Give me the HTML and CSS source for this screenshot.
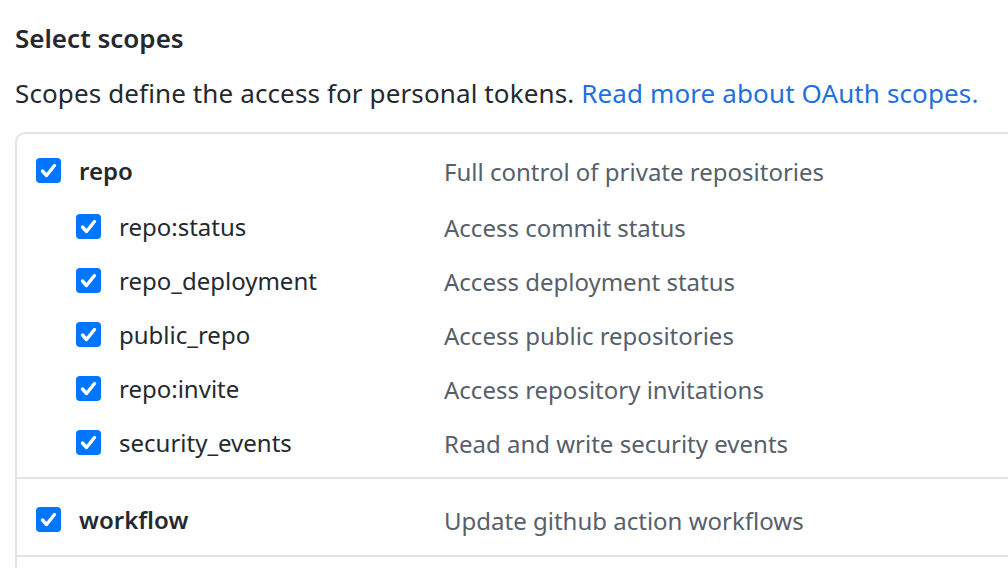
FILE: index.html
```html
<!DOCTYPE html>
<html>
<head>
<meta charset="utf-8">
<link rel="stylesheet" href="styles.css">
</head>
<body>
<div class="page">
  <h3 class="title">Select scopes</h3>
  <p class="lead">Scopes define the access for personal tokens. <a href="#" class="link">Read more about OAuth scopes.</a></p>
  <div class="box">
    <div class="group first">
      <div class="row main">
        <span class="name"><span class="cb"><svg viewBox="0 0 25 25" width="25" height="25"><path d="M6.5 13 L10.5 17.5 L18.5 7.5" fill="none" stroke="#fff" stroke-width="3.4" stroke-linecap="round" stroke-linejoin="round"/></svg></span><b>repo</b></span>
        <span class="desc">Full control of private repositories</span>
      </div>
      <div class="sub">
        <div class="row">
          <span class="name"><span class="cb"><svg viewBox="0 0 25 25" width="25" height="25"><path d="M6.5 13 L10.5 17.5 L18.5 7.5" fill="none" stroke="#fff" stroke-width="3.4" stroke-linecap="round" stroke-linejoin="round"/></svg></span>repo:status</span>
          <span class="desc">Access commit status</span>
        </div>
        <div class="row">
          <span class="name"><span class="cb"><svg viewBox="0 0 25 25" width="25" height="25"><path d="M6.5 13 L10.5 17.5 L18.5 7.5" fill="none" stroke="#fff" stroke-width="3.4" stroke-linecap="round" stroke-linejoin="round"/></svg></span>repo_deployment</span>
          <span class="desc">Access deployment status</span>
        </div>
        <div class="row">
          <span class="name"><span class="cb"><svg viewBox="0 0 25 25" width="25" height="25"><path d="M6.5 13 L10.5 17.5 L18.5 7.5" fill="none" stroke="#fff" stroke-width="3.4" stroke-linecap="round" stroke-linejoin="round"/></svg></span>public_repo</span>
          <span class="desc">Access public repositories</span>
        </div>
        <div class="row">
          <span class="name"><span class="cb"><svg viewBox="0 0 25 25" width="25" height="25"><path d="M6.5 13 L10.5 17.5 L18.5 7.5" fill="none" stroke="#fff" stroke-width="3.4" stroke-linecap="round" stroke-linejoin="round"/></svg></span>repo:invite</span>
          <span class="desc">Access repository invitations</span>
        </div>
        <div class="row">
          <span class="name"><span class="cb"><svg viewBox="0 0 25 25" width="25" height="25"><path d="M6.5 13 L10.5 17.5 L18.5 7.5" fill="none" stroke="#fff" stroke-width="3.4" stroke-linecap="round" stroke-linejoin="round"/></svg></span>security_events</span>
          <span class="desc">Read and write security events</span>
        </div>
      </div>
    </div>
    <div class="group second">
      <div class="row main">
        <span class="name"><span class="cb"><svg viewBox="0 0 25 25" width="25" height="25"><path d="M6.5 13 L10.5 17.5 L18.5 7.5" fill="none" stroke="#fff" stroke-width="3.4" stroke-linecap="round" stroke-linejoin="round"/></svg></span><b>workflow</b></span>
        <span class="desc">Update github action workflows</span>
      </div>
    </div>
    <div class="group third"></div>
  </div>
</div>
</body>
</html>
```

FILE: styles.css
```css
html, body {
  margin: 0;
  padding: 0;
  background: #fff;
  overflow: hidden;
}
body {
  font-family: "Noto Sans", "Open Sans", sans-serif;
  color: #24292f;
}
.page {
  box-sizing: border-box;
  width: 1008px;
  height: 568px;
  overflow: hidden;
  padding: 0 0 0 15px;
}
.title {
  margin: 0;
  padding-top: 20px;
  font-size: 26px;
  line-height: 36px;
  font-weight: 600;
}
.lead {
  margin: 0;
  padding-top: 19px;
  font-size: 26px;
  line-height: 36px;
  letter-spacing: 0.12px;
  white-space: nowrap;
}
.link {
  color: #1f6fe0;
  text-decoration: none;
}
.box {
  margin-top: 21px;
  width: 1200px;
  border: 2px solid #e1e4e8;
  border-radius: 10px;
}
.group {
  border-bottom: 2px solid #e1e4e8;
}
.group.first {
  padding: 9px 0 8px;
}
.group.second {
  padding: 13px 0 9px;
}
.group.third {
  height: 40px;
  border-bottom: 0;
}
.sub {
  margin-top: 2px;
}
.row {
  display: grid;
  grid-template-columns: 427px 1fr;
  align-items: center;
  height: 54px;
  font-size: 24px;
}
.name {
  display: flex;
  align-items: center;
  gap: 18px;
  padding-left: 59px;
  white-space: nowrap;
}
.row.main .name {
  padding-left: 19px;
}
.name b {
  font-weight: 600;
}
.cb {
  display: inline-flex;
  width: 25px;
  height: 25px;
  border-radius: 4px;
  background: #0075ff;
  flex: none;
}
.desc {
  color: #57606a;
  white-space: nowrap;
  padding-top: 2px;
}
```
